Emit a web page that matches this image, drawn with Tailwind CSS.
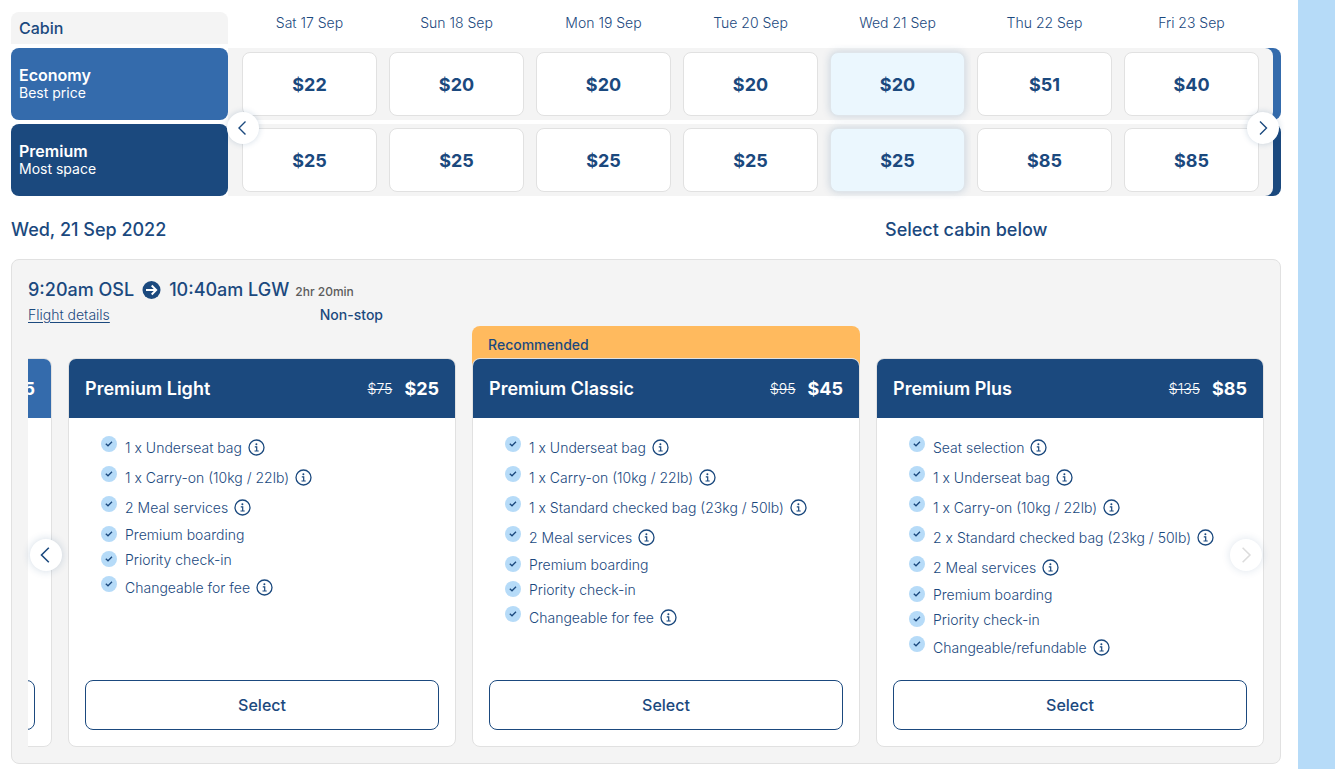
<!doctype html>
<html lang="en">

<head>
    <meta charset="UTF-8">
    <meta name="viewport" content="width=device-width, initial-scale=1.0">
    <title>Select flight</title>
    <script src="https://cdn.jsdelivr.net/npm/@tailwindcss/browser@4"></script>
</head>

<body class="bg-[#b6dbf8] font-['Inter',sans-serif] text-[#1b497e]">

    <!-- Icons -->
    <svg class="hidden">
        <symbol id="check" viewBox="0 0 16 16">
            <circle cx="8" cy="8" r="8" fill="#b6dbf8" />
            <path d="M4.800 7.800l2.200 2 4-4" fill="none" stroke="#1b497e" stroke-width="1.3" />
        </symbol>
        <symbol id="info" viewBox="0 0 17 17">
            <circle cx="8.500" cy="8.500" r="7.500" fill="none" stroke="#1b497e" stroke-width="1.3" />
            <circle cx="8.400" cy="5.300" r="1" fill="#1b497e" />
            <path d="M6.800 7.800h1.900v4M6.500 12h4.200" fill="none" stroke="#1b497e" stroke-width="1.2" />
        </symbol>
        <symbol id="left" viewBox="0 0 16 16">
            <path d="M10.500 1.500L4 8l6.500 6.500" fill="none" stroke="currentColor" stroke-width="1.400" />
        </symbol>
        <symbol id="right" viewBox="0 0 16 16">
            <path d="M5 1.500L11.500 8 5 14.500" fill="none" stroke="currentColor" stroke-width="1.400" />
        </symbol>
    </svg>

    <main class="mr-[37px] min-h-screen bg-white pt-2 pr-[17px] pb-[5px] pl-[11px]">

        <!-- Low fare calendar -->
        <div class="relative">
            <table class="w-full table-fixed border-separate border-spacing-x-0 border-spacing-y-1">
                <colgroup>
                    <col class="w-[217px]">
                    <col class="w-2">
                    <col span="7">
                    <col class="w-4">
                </colgroup>
                <thead>
                    <tr class="h-8 align-top text-sm leading-[22px]">
                        <th class="rounded-t-lg bg-[#f4f4f4] px-2 py-0 text-left text-base leading-8 font-medium">Cabin</th>
                        <td></td>
                        <th class="p-0 font-light">Sat 17 Sep</th>
                        <th class="p-0 font-light">Sun 18 Sep</th>
                        <th class="p-0 font-light">Mon 19 Sep</th>
                        <th class="p-0 font-light">Tue 20 Sep</th>
                        <th class="p-0 font-light">Wed 21 Sep</th>
                        <th class="p-0 font-light">Thu 22 Sep</th>
                        <th class="p-0 font-light">Fri 23 Sep</th>
                        <td></td>
                    </tr>
                </thead>
                <tbody class="text-lg font-bold">
                    <tr>
                        <th class="rounded-lg bg-[#346bac] px-2 py-0 text-left text-base leading-[18px] font-semibold text-white">
                            Economy<span class="block text-sm leading-[18px] font-normal">Best price</span>
                        </th>
                        <td class="bg-[#f4f4f4]"></td>
                        <td class="bg-[#f4f4f4] px-1.5 py-1"><button class="block h-16 w-full rounded-lg border border-[#e1e1e1] bg-white pt-0.5">$22</button></td>
                        <td class="bg-[#f4f4f4] px-1.5 py-1"><button class="block h-16 w-full rounded-lg border border-[#e1e1e1] bg-white pt-0.5">$20</button></td>
                        <td class="bg-[#f4f4f4] px-1.5 py-1"><button class="block h-16 w-full rounded-lg border border-[#e1e1e1] bg-white pt-0.5">$20</button></td>
                        <td class="bg-[#f4f4f4] px-1.5 py-1"><button class="block h-16 w-full rounded-lg border border-[#e1e1e1] bg-white pt-0.5">$20</button></td>
                        <td class="bg-[#f4f4f4] px-1.5 py-1"><button class="block h-16 w-full rounded-lg border border-[#dfe5ea] bg-[#ebf7fe] pt-0.5 shadow-[0_0_8px_rgba(27,73,126,0.2)]">$20</button></td>
                        <td class="bg-[#f4f4f4] px-1.5 py-1"><button class="block h-16 w-full rounded-lg border border-[#e1e1e1] bg-white pt-0.5">$51</button></td>
                        <td class="bg-[#f4f4f4] px-1.5 py-1"><button class="block h-16 w-full rounded-lg border border-[#e1e1e1] bg-white pt-0.5">$40</button></td>
                        <td class="rounded-r-lg bg-[#346bac] p-0">
                            <div class="h-18 w-2 rounded-r-lg bg-[#f4f4f4]"></div>
                        </td>
                    </tr>
                    <tr>
                        <th class="rounded-lg bg-[#1b497e] px-2 py-0 text-left text-base leading-[18px] font-semibold text-white">
                            Premium<span class="block text-sm leading-[18px] font-normal">Most space</span>
                        </th>
                        <td class="bg-[#f4f4f4]"></td>
                        <td class="bg-[#f4f4f4] px-1.5 py-1"><button class="block h-16 w-full rounded-lg border border-[#e1e1e1] bg-white pt-0.5">$25</button></td>
                        <td class="bg-[#f4f4f4] px-1.5 py-1"><button class="block h-16 w-full rounded-lg border border-[#e1e1e1] bg-white pt-0.5">$25</button></td>
                        <td class="bg-[#f4f4f4] px-1.5 py-1"><button class="block h-16 w-full rounded-lg border border-[#e1e1e1] bg-white pt-0.5">$25</button></td>
                        <td class="bg-[#f4f4f4] px-1.5 py-1"><button class="block h-16 w-full rounded-lg border border-[#e1e1e1] bg-white pt-0.5">$25</button></td>
                        <td class="bg-[#f4f4f4] px-1.5 py-1"><button class="block h-16 w-full rounded-lg border border-[#dfe5ea] bg-[#ebf7fe] pt-0.5 shadow-[0_0_8px_rgba(27,73,126,0.2)]">$25</button></td>
                        <td class="bg-[#f4f4f4] px-1.5 py-1"><button class="block h-16 w-full rounded-lg border border-[#e1e1e1] bg-white pt-0.5">$85</button></td>
                        <td class="bg-[#f4f4f4] px-1.5 py-1"><button class="block h-16 w-full rounded-lg border border-[#e1e1e1] bg-white pt-0.5">$85</button></td>
                        <td class="rounded-r-lg bg-[#1b497e] p-0">
                            <div class="h-18 w-2 rounded-r-lg bg-[#f4f4f4]"></div>
                        </td>
                    </tr>
                </tbody>
            </table>
            <button aria-label="Previous dates" class="absolute top-26 left-54 flex size-8 items-center justify-center rounded-full bg-white shadow-[0_0_6px_rgba(27,73,126,0.2)]">
                <svg class="size-4"><use href="#left" /></svg>
            </button>
            <button aria-label="Next dates" class="absolute top-26 right-0.5 flex size-8 items-center justify-center rounded-full bg-white shadow-[0_0_6px_rgba(27,73,126,0.2)]">
                <svg class="size-4"><use href="#right" /></svg>
            </button>
        </div>

        <div class="flex h-[59px] items-center justify-between text-lg font-medium">
            <h2>Wed, 21 Sep 2022</h2>
            <p class="w-[396px]">Select cabin below</p>
        </div>

        <!-- Flight -->
        <section class="rounded-lg border border-[#e1e1e1] bg-[#f4f4f4] p-4">
            <div class="flex h-7 items-center text-lg font-medium">
                <span>9:20am OSL</span>
                <svg class="mx-2 size-[19px]" viewBox="0 0 19 19">
                    <circle cx="9.500" cy="9" r="9" fill="#1b497e" />
                    <path d="M4 9h10M9.700 4.500l4.500 4.500-4.500 4.500" fill="none" stroke="#fff" stroke-width="1.900" />
                </svg>
                <span>10:40am LGW</span>
                <span class="mt-1 ml-1.5 text-xs text-[#5c5c5c]">2hr 20min</span>
            </div>
            <div class="flex h-[22px] w-[355px] justify-between text-sm leading-[22px]">
                <a href="#" class="font-light underline underline-offset-2">Flight details</a>
                <span class="font-medium">Non-stop</span>
            </div>

            <!-- Fare cards -->
            <div class="relative">
                <div class="flex justify-end gap-4 overflow-hidden pt-8">

                    <article class="flex w-[calc((100%-72px)/3)] flex-none flex-col overflow-hidden rounded-lg border border-[#e1e1e1] bg-white">
                        <header class="flex h-[59px] items-center bg-[#346bac] px-4 text-lg font-semibold text-white">
                            <h3 class="flex-1">Economy Plus</h3>
                            <span class="font-bold">$65</span>
                        </header>
                        <button class="mx-4 mt-auto mb-4 h-[50px] rounded-lg border border-[#1b497e] font-medium">Select</button>
                    </article>

                    <article class="flex w-[calc((100%-72px)/3)] flex-none flex-col overflow-hidden rounded-lg border border-[#e1e1e1] bg-white">
                        <header class="flex h-[59px] items-center bg-[#1b497e] px-4 text-lg font-semibold text-white">
                            <h3 class="flex-1">Premium Light</h3>
                            <s class="mr-3 text-sm font-light">$75</s>
                            <span class="font-bold">$25</span>
                        </header>
                        <ul class="px-8 pt-[18px] pb-3.5 text-sm font-light">
                            <li class="flex h-[30px] leading-6"><svg class="mr-2 size-4"><use href="#check" /></svg>1 x Underseat bag<svg class="mt-[3px] ml-1.5 size-[17px]"><use href="#info" /></svg></li>
                            <li class="flex h-[30px] leading-6"><svg class="mr-2 size-4"><use href="#check" /></svg>1 x Carry-on (10kg / 22lb)<svg class="mt-[3px] ml-1.5 size-[17px]"><use href="#info" /></svg></li>
                            <li class="flex h-[30px] leading-6"><svg class="mr-2 size-4"><use href="#check" /></svg>2 Meal services<svg class="mt-[3px] ml-1.5 size-[17px]"><use href="#info" /></svg></li>
                            <li class="flex h-[25px] leading-[18px]"><svg class="mr-2 size-4"><use href="#check" /></svg>Premium boarding</li>
                            <li class="flex h-[25px] leading-[18px]"><svg class="mr-2 size-4"><use href="#check" /></svg>Priority check-in</li>
                            <li class="flex h-[30px] leading-6"><svg class="mr-2 size-4"><use href="#check" /></svg>Changeable for fee<svg class="mt-[3px] ml-1.5 size-[17px]"><use href="#info" /></svg></li>
                        </ul>
                        <button class="mx-4 mt-auto mb-4 h-[50px] rounded-lg border border-[#1b497e] font-medium">Select</button>
                    </article>

                    <div class="relative flex w-[calc((100%-72px)/3)] flex-none">
                        <div class="absolute inset-x-0 -top-8 h-12 rounded-t-lg bg-[#ffba5e] px-4 text-sm leading-[38px] font-medium">Recommended</div>
                        <article class="relative flex w-full flex-col overflow-hidden rounded-lg border border-[#e1e1e1] bg-white">
                            <header class="flex h-[59px] items-center bg-[#1b497e] px-4 text-lg font-semibold text-white">
                                <h3 class="flex-1">Premium Classic</h3>
                                <s class="mr-3 text-sm font-light">$95</s>
                                <span class="font-bold">$45</span>
                            </header>
                            <ul class="px-8 pt-[18px] pb-3.5 text-sm font-light">
                                <li class="flex h-[30px] leading-6"><svg class="mr-2 size-4"><use href="#check" /></svg>1 x Underseat bag<svg class="mt-[3px] ml-1.5 size-[17px]"><use href="#info" /></svg></li>
                                <li class="flex h-[30px] leading-6"><svg class="mr-2 size-4"><use href="#check" /></svg>1 x Carry-on (10kg / 22lb)<svg class="mt-[3px] ml-1.5 size-[17px]"><use href="#info" /></svg></li>
                                <li class="flex h-[30px] leading-6"><svg class="mr-2 size-4"><use href="#check" /></svg>1 x Standard checked bag (23kg / 50lb)<svg class="mt-[3px] ml-1.5 size-[17px]"><use href="#info" /></svg></li>
                                <li class="flex h-[30px] leading-6"><svg class="mr-2 size-4"><use href="#check" /></svg>2 Meal services<svg class="mt-[3px] ml-1.5 size-[17px]"><use href="#info" /></svg></li>
                                <li class="flex h-[25px] leading-[18px]"><svg class="mr-2 size-4"><use href="#check" /></svg>Premium boarding</li>
                                <li class="flex h-[25px] leading-[18px]"><svg class="mr-2 size-4"><use href="#check" /></svg>Priority check-in</li>
                                <li class="flex h-[30px] leading-6"><svg class="mr-2 size-4"><use href="#check" /></svg>Changeable for fee<svg class="mt-[3px] ml-1.5 size-[17px]"><use href="#info" /></svg></li>
                            </ul>
                            <button class="mx-4 mt-auto mb-4 h-[50px] rounded-lg border border-[#1b497e] font-medium">Select</button>
                        </article>
                    </div>

                    <article class="flex w-[calc((100%-72px)/3)] flex-none flex-col overflow-hidden rounded-lg border border-[#e1e1e1] bg-white">
                        <header class="flex h-[59px] items-center bg-[#1b497e] px-4 text-lg font-semibold text-white">
                            <h3 class="flex-1">Premium Plus</h3>
                            <s class="mr-3 text-sm font-light">$135</s>
                            <span class="font-bold">$85</span>
                        </header>
                        <ul class="px-8 pt-[18px] pb-3.5 text-sm font-light">
                            <li class="flex h-[30px] leading-6"><svg class="mr-2 size-4"><use href="#check" /></svg>Seat selection<svg class="mt-[3px] ml-1.5 size-[17px]"><use href="#info" /></svg></li>
                            <li class="flex h-[30px] leading-6"><svg class="mr-2 size-4"><use href="#check" /></svg>1 x Underseat bag<svg class="mt-[3px] ml-1.5 size-[17px]"><use href="#info" /></svg></li>
                            <li class="flex h-[30px] leading-6"><svg class="mr-2 size-4"><use href="#check" /></svg>1 x Carry-on (10kg / 22lb)<svg class="mt-[3px] ml-1.5 size-[17px]"><use href="#info" /></svg></li>
                            <li class="flex h-[30px] leading-6"><svg class="mr-2 size-4"><use href="#check" /></svg>2 x Standard checked bag (23kg / 50lb)<svg class="mt-[3px] ml-1.5 size-[17px]"><use href="#info" /></svg></li>
                            <li class="flex h-[30px] leading-6"><svg class="mr-2 size-4"><use href="#check" /></svg>2 Meal services<svg class="mt-[3px] ml-1.5 size-[17px]"><use href="#info" /></svg></li>
                            <li class="flex h-[25px] leading-[18px]"><svg class="mr-2 size-4"><use href="#check" /></svg>Premium boarding</li>
                            <li class="flex h-[25px] leading-[18px]"><svg class="mr-2 size-4"><use href="#check" /></svg>Priority check-in</li>
                            <li class="flex h-[30px] leading-6"><svg class="mr-2 size-4"><use href="#check" /></svg>Changeable/refundable<svg class="mt-[3px] ml-1.5 size-[17px]"><use href="#info" /></svg></li>
                        </ul>
                        <button class="mx-4 mt-auto mb-4 h-[50px] rounded-lg border border-[#1b497e] font-medium">Select</button>
                    </article>
                </div>

                <button aria-label="Previous fares" class="absolute bottom-44 left-0.5 flex size-8 items-center justify-center rounded-full bg-white shadow-[0_0_8px_rgba(27,73,126,0.2)]">
                    <svg class="size-[18px]"><use href="#left" /></svg>
                </button>
                <button aria-label="Next fares" disabled class="absolute right-0.5 bottom-44 flex size-8 items-center justify-center rounded-full bg-white text-[#dcdcdc] shadow-[0_0_8px_rgba(27,73,126,0.15)]">
                    <svg class="size-[18px]"><use href="#right" /></svg>
                </button>
            </div>
        </section>
    </main>

</body>

</html>
